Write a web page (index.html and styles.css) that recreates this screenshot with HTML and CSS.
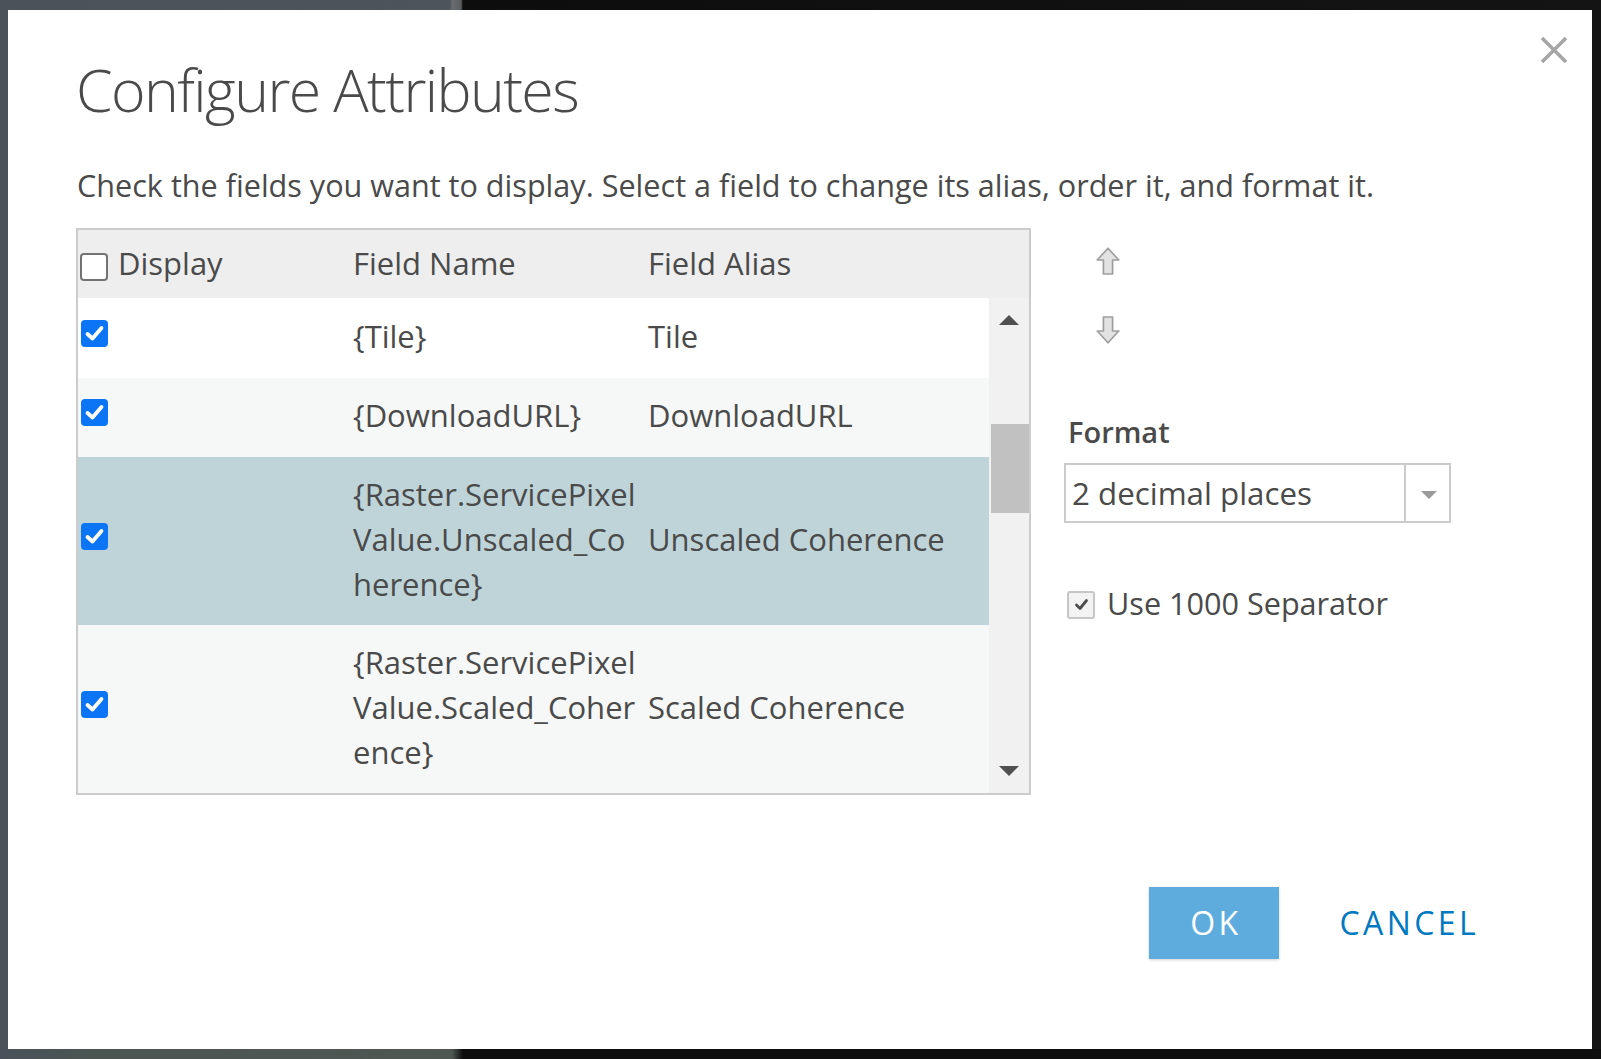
FILE: index.html
```html
<!DOCTYPE html>
<html lang="en">
<head>
<meta charset="utf-8">
<title>Configure Attributes</title>
<link rel="stylesheet" href="styles.css">
</head>
<body>
<div class="modal">
  <button class="close" aria-label="Close">
    <svg width="28" height="28" viewBox="0 0 28 28"><path d="M2 2 L26 26 M26 2 L2 26" stroke="#a6a6a6" stroke-width="3.6" fill="none"/></svg>
  </button>

  <h1 class="title">Configure Attributes</h1>
  <p class="intro">Check the fields you want to display. Select a field to change its alias, order it, and format it.</p>

  <div class="main">
    <div class="grid">
      <div class="thead">
        <div class="h-check"><span class="cb cb-empty"></span><span class="h-text">Display</span></div>
        <div class="cell">Field Name</div>
        <div class="cell">Field Alias</div>
      </div>
      <div class="tbody">
        <div class="rows">
          <div class="row r1">
            <div class="c-check"><span class="cb cb-on"><svg width="21" height="21" viewBox="0 0 21 21"><path d="M3.5 11 L8.5 15.5 L17.5 5" stroke="#fff" stroke-width="3.8" fill="none" stroke-linecap="round" stroke-linejoin="round"/></svg></span></div>
            <div class="cell">{Tile}</div>
            <div class="cell">Tile</div>
          </div>
          <div class="row r2">
            <div class="c-check"><span class="cb cb-on"><svg width="21" height="21" viewBox="0 0 21 21"><path d="M3.5 11 L8.5 15.5 L17.5 5" stroke="#fff" stroke-width="3.8" fill="none" stroke-linecap="round" stroke-linejoin="round"/></svg></span></div>
            <div class="cell">{DownloadURL}</div>
            <div class="cell">DownloadURL</div>
          </div>
          <div class="row r3">
            <div class="c-check"><span class="cb cb-on"><svg width="21" height="21" viewBox="0 0 21 21"><path d="M3.5 11 L8.5 15.5 L17.5 5" stroke="#fff" stroke-width="3.8" fill="none" stroke-linecap="round" stroke-linejoin="round"/></svg></span></div>
            <div class="cell">{Raster.ServicePixel<br>Value.Unscaled_Co<br>herence}</div>
            <div class="cell">Unscaled Coherence</div>
          </div>
          <div class="row r4">
            <div class="c-check"><span class="cb cb-on"><svg width="21" height="21" viewBox="0 0 21 21"><path d="M3.5 11 L8.5 15.5 L17.5 5" stroke="#fff" stroke-width="3.8" fill="none" stroke-linecap="round" stroke-linejoin="round"/></svg></span></div>
            <div class="cell">{Raster.ServicePixel<br>Value.Scaled_Coher<br>ence}</div>
            <div class="cell">Scaled Coherence</div>
          </div>
        </div>
        <div class="scrollbar">
          <span class="sb-up"></span>
          <span class="sb-thumb"></span>
          <span class="sb-down"></span>
        </div>
      </div>
    </div>

    <div class="panel">
      <div class="movers">
        <svg class="mover" width="24" height="28" viewBox="0 0 24 28"><path d="M12 1.2 L22.8 13 L16.6 13 L16.6 27 L7.4 27 L7.4 13 L1.2 13 Z" fill="#e2e2e2" stroke="#9f9f9f" stroke-width="1.7" stroke-linejoin="round"/></svg>
        <svg class="mover" width="24" height="28" viewBox="0 0 24 28"><path d="M12 26.8 L22.8 15 L16.6 15 L16.6 1 L7.4 1 L7.4 15 L1.2 15 Z" fill="#e2e2e2" stroke="#9f9f9f" stroke-width="1.7" stroke-linejoin="round"/></svg>
      </div>
      <div class="label">Format</div>
      <div class="select">
        <div class="select-value">2 decimal places</div>
        <div class="select-arrow"><span class="caret"></span></div>
      </div>
      <div class="sep">
        <span class="sep-box"><svg width="17" height="17" viewBox="0 0 17 17"><path d="M3.5 9 L7 12.5 L13.5 4.5" stroke="#4d4d4d" stroke-width="2.8" fill="none" stroke-linecap="round" stroke-linejoin="round"/></svg></span>
        <span>Use 1000 Separator</span>
      </div>
    </div>
  </div>

  <div class="footer">
    <button class="btn ok">OK</button>
    <button class="btn cancel">CANCEL</button>
  </div>
</div>
</body>
</html>
```
FILE: styles.css
```css
html, body {
  margin: 0;
}

body {
  box-sizing: border-box;
  min-height: 1059px;
  padding: 10px 9px 10px 8px;
  font-family: "Open Sans", "Noto Sans", sans-serif;
  color: #4a4a4a;
  background:
    linear-gradient(to right, #49525a 0, #4b5551 100px, #4f5753 452px, #0e0e0e 463px) left bottom / 100% 10px no-repeat,
    linear-gradient(to right, #4a525a 0, #4d545b 450px, #6a6d70 452px, #5b5e61 461px, #0d0d0d 463px, #141414 100%);
}

.modal {
  position: relative;
  box-sizing: border-box;
  width: 1584px;
  height: 1039px;
  padding: 44px 24px 0 68px;
  background: #ffffff;
}

.close {
  position: absolute;
  top: 26px;
  right: 24px;
  width: 28px;
  height: 28px;
  padding: 0;
  border: 0;
  background: none;
  display: flex;
}

.title {
  margin: 0;
  font-weight: 300;
  font-size: 59px;
  line-height: 71px;
  letter-spacing: -1.6px;
  color: #4a4a4a;
}

.intro {
  margin: 38px 0 0 1px;
  font-size: 30.6px;
  line-height: 45px;
}

.main {
  display: flex;
  gap: 33px;
  margin-top: 20px;
}

/* table */
.grid {
  box-sizing: border-box;
  width: 955px;
  height: 567px;
  border: 2px solid #cccccc;
  display: flex;
  flex-direction: column;
  overflow: hidden;
}

.thead,
.row {
  display: grid;
  grid-template-columns: 275px 295px 1fr;
  align-items: center;
  font-size: 31px;
  line-height: 45px;
}

.thead {
  flex: none;
  height: 68px;
  background: #eeeeee;
}

.thead .cell {
  margin-bottom: 2px;
}

.h-check {
  display: flex;
  align-items: center;
}

.h-check .cb {
  margin-left: 2px;
  margin-top: 5px;
}

.h-text {
  margin-left: 10px;
  margin-bottom: 2px;
}

.tbody {
  flex: 1;
  min-height: 0;
  display: flex;
}

.rows {
  flex: 1;
  overflow: hidden;
}

.row .cell {
  white-space: nowrap;
  margin-bottom: 4px;
}

.r1 { height: 80px; background: #ffffff; }
.r2 { height: 79px; background: #f6f8f8; }
.r3 { height: 168px; background: #bfd4d9; }
.r4 { height: 168px; background: #f6f8f8; }

.c-check {
  display: flex;
}

.cb {
  box-sizing: border-box;
  width: 27px;
  height: 27px;
  border-radius: 4px;
  display: flex;
  align-items: center;
  justify-content: center;
}

.c-check .cb {
  margin-left: 3px;
  margin-bottom: 10px;
}

.cb-on {
  background: #0b75f6;
}

.cb-empty {
  width: 28px;
  height: 28px;
  border: 2px solid #737373;
  background: #ffffff;
}

/* scrollbar */
.scrollbar {
  flex: none;
  width: 40px;
  background: #f1f1f1;
  display: flex;
  flex-direction: column;
  align-items: center;
}

.sb-up,
.sb-down {
  width: 0;
  height: 0;
  border-left: 10px solid transparent;
  border-right: 10px solid transparent;
}

.sb-up {
  margin-top: 17px;
  border-bottom: 10px solid #505050;
}

.sb-thumb {
  align-self: stretch;
  margin: 99px 0 0 2px;
  height: 89px;
  background: #c1c1c1;
}

.sb-down {
  margin-top: auto;
  margin-bottom: 17px;
  border-top: 10px solid #505050;
}

/* right panel */
.panel {
  width: 387px;
  display: flex;
  flex-direction: column;
}

.movers {
  display: flex;
  flex-direction: column;
  gap: 41px;
  padding: 19px 0 0 32px;
}

.mover {
  display: block;
}

.label {
  margin: 68px 0 0 4px;
  font-weight: 600;
  font-size: 29px;
  line-height: 40px;
  color: #4a4a4a;
}

.select {
  box-sizing: border-box;
  margin-top: 11px;
  height: 60px;
  border: 2px solid #cbcbcb;
  display: flex;
}

.select-value {
  flex: 1;
  padding-left: 6px;
  font-size: 31.3px;
  line-height: 56px;
}

.select-arrow {
  width: 43px;
  border-left: 2px solid #cbcbcb;
  display: flex;
  align-items: center;
  justify-content: center;
}

.caret {
  width: 0;
  height: 0;
  margin: 3px 0 0 3px;
  border-left: 8.5px solid transparent;
  border-right: 8.5px solid transparent;
  border-top: 8px solid #9a9a9a;
}

.sep {
  margin-top: 58px;
  display: flex;
  align-items: center;
  font-size: 30.6px;
  line-height: 45px;
}

.sep-box {
  box-sizing: border-box;
  width: 28px;
  height: 28px;
  margin: 2px 12px 0 3px;
  border: 2px solid #c6c6c6;
  border-radius: 3px;
  background: #f3f3f3;
  display: flex;
  align-items: center;
  justify-content: center;
}

/* footer */
.footer {
  display: flex;
  justify-content: flex-end;
  gap: 40px;
  margin-top: 92px;
  padding-right: 69px;
}

.btn {
  height: 72px;
  border: 0;
  font-family: "Open Sans", "Noto Sans", sans-serif;
  font-size: 32px;
  line-height: 72px;
  letter-spacing: 3.4px;
  cursor: pointer;
}

.ok {
  width: 130px;
  padding: 0 0 0 3px;
  background: #5dacdd;
  color: #ffffff;
  box-shadow: 0 1px 3px rgba(0, 0, 0, 0.18);
}

.cancel {
  padding: 0 20px;
  background: none;
  color: #0079c1;
}
```
